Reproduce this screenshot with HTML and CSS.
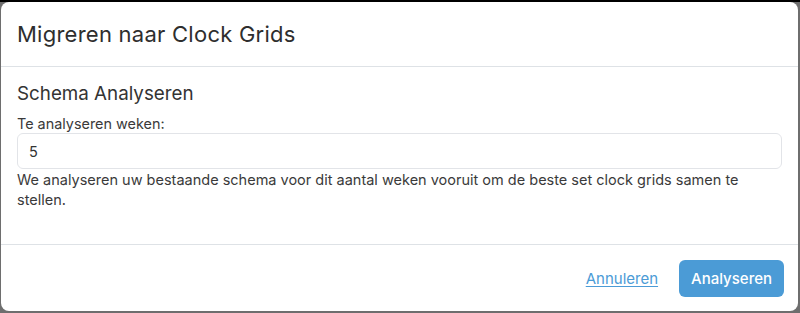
FILE: index.html
```html
<!DOCTYPE html>
<html lang="nl">
<head>
<meta charset="utf-8">
<title>Migreren naar Clock Grids</title>
<link rel="stylesheet" href="styles.css">
</head>
<body>
<div class="backdrop">
  <div class="modal">
    <div class="modal-header">
      <h4 class="modal-title">Migreren naar Clock Grids</h4>
    </div>
    <div class="modal-body">
      <h5 class="section-title">Schema Analyseren</h5>
      <label class="field-label" for="weeks">Te analyseren weken:</label>
      <input class="field-input" id="weeks" type="text" value="5">
      <p class="help-text">We analyseren uw bestaande schema voor dit aantal weken vooruit om de beste set clock grids samen te stellen.</p>
    </div>
    <div class="modal-footer">
      <a class="link-btn" href="#">Annuleren</a>
      <button class="primary-btn" type="button">Analyseren</button>
    </div>
  </div>
</div>
</body>
</html>
```
FILE: styles.css
```css
* { box-sizing: border-box; }
html, body {
  margin: 0;
  padding: 0;
  width: 800px;
  height: 313px;
  overflow: hidden;
}
body {
  background: #6e6e6e;
  font-family: Inter, "Noto Sans", sans-serif;
  color: #333;
}
.backdrop {
  height: 313px;
  padding: 0 2px 2px 1px;
  border-top: 2px solid #000;
}
.modal {
  background: #fff;
  border-radius: 8px;
  width: 797px;
  height: 309px;
  display: flex;
  flex-direction: column;
  overflow: hidden;
}
.modal-header {
  height: 65px;
  padding: 0 16px;
  display: flex;
  align-items: center;
  border-bottom: 1px solid #dee2e6;
}
.modal-title {
  margin: 0;
  font-size: 22px;
  font-weight: 400;
  letter-spacing: 0.25px;
  color: #2e2e2e;
  line-height: 1.2;
}
.modal-body {
  padding: 16px 16px 0 16px;
  height: 178px;
  border-bottom: 1px solid #dee2e6;
}
.section-title {
  margin: 0 0 9px 0;
  font-size: 18.8px;
  font-weight: 400;
  color: #333;
  line-height: 22px;
}
.field-label {
  display: block;
  font-size: 14.4px;
  line-height: 19px;
  color: #3a3a3a;
  margin-bottom: 0;
}
.field-input {
  display: block;
  width: 100%;
  height: 36px;
  padding: 0 11px;
  border: 1px solid #e2e4e8;
  border-radius: 6px;
  font-family: inherit;
  font-size: 14.5px;
  color: #333;
  background: #fff;
  outline: none;
}
.help-text {
  margin: 1px 0 0 0;
  font-size: 14.5px;
  line-height: 20px;
  color: #3a3a3a;
}
.modal-footer {
  flex: 1;
  display: flex;
  justify-content: flex-end;
  align-items: center;
  gap: 21px;
  padding: 0 14px 0 16px;
}
.link-btn {
  color: #4b9bd6;
  font-size: 15px;
  text-decoration: underline;
  text-underline-offset: 2px;
}
.primary-btn {
  background: #4b9bd6;
  color: #fff;
  border: none;
  border-radius: 6px;
  height: 37px;
  padding: 0 12px;
  font-family: inherit;
  font-size: 15px;
  font-weight: 500;
}
```
